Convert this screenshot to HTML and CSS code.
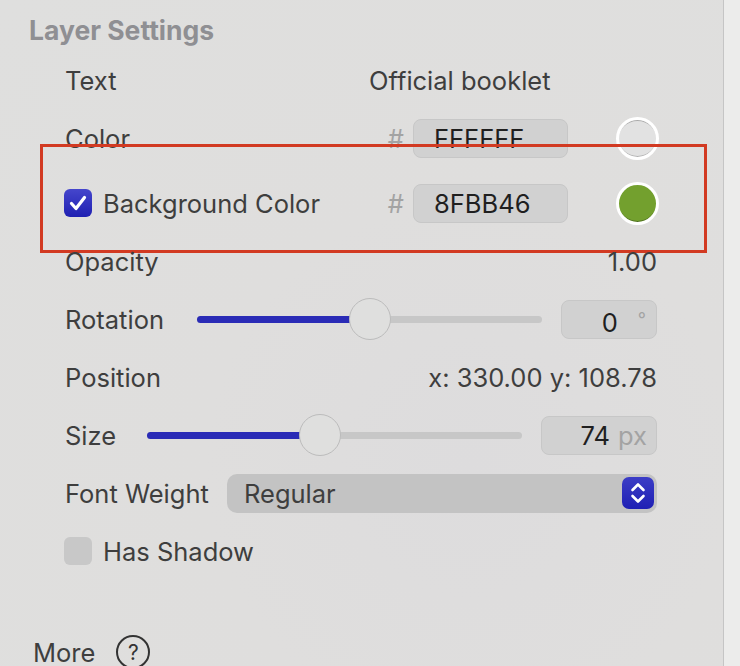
FILE: index.html
```html
<!DOCTYPE html>
<html lang="en">
  <head>
    <meta charset="UTF-8" />
    <title>Layer Settings</title>
    <link rel="stylesheet" href="styles.css">
  </head>
  <body>
    <div class="window">
      <section class="panel">
        <h2 class="panel-title">Layer Settings</h2>

        <div class="rows">
          <div class="row">
            <span class="label label-fixed">Text</span>
            <span class="value">Official booklet</span>
          </div>

          <div class="row">
            <span class="label">Color</span>
            <span class="hash">#</span>
            <div class="field field-hex">FFFFFF</div>
            <div class="swatch swatch-white"></div>
          </div>

          <!-- 배경색 (강조 표시) -->
          <div class="row row-highlight">
            <label class="check">
              <span class="checkbox checked">
                <svg viewBox="0 0 28 28" width="28" height="28">
                  <path d="M7.5 14.5 L12 19.5 L20.5 8.5" fill="none" stroke="#fff" stroke-width="3.2" stroke-linecap="round" stroke-linejoin="round"/>
                </svg>
              </span>
              <span class="label">Background Color</span>
            </label>
            <span class="hash">#</span>
            <div class="field field-hex">8FBB46</div>
            <div class="swatch swatch-green"></div>
            <div class="highlight-box"></div>
          </div>

          <div class="row">
            <span class="label">Opacity</span>
            <span class="value value-right">1.00</span>
          </div>

          <div class="row">
            <span class="label label-rotation">Rotation</span>
            <div class="slider slider-rotation">
              <div class="slider-fill" style="width: 50%"></div>
              <div class="slider-thumb" style="left: 50%"></div>
            </div>
            <div class="field field-num field-rotation">0<span class="unit unit-deg">°</span></div>
          </div>

          <div class="row">
            <span class="label">Position</span>
            <span class="value value-right">x: 330.00 y: 108.78</span>
          </div>

          <div class="row">
            <span class="label label-size">Size</span>
            <div class="slider slider-size">
              <div class="slider-fill" style="width: 46%"></div>
              <div class="slider-thumb" style="left: 46%"></div>
            </div>
            <div class="field field-num field-size">74<span class="unit">px</span></div>
          </div>

          <div class="row">
            <span class="label label-weight">Font Weight</span>
            <div class="select">
              <span>Regular</span>
              <span class="stepper">
                <svg viewBox="0 0 32 32" width="32" height="32">
                  <path d="M10.5 13 L16 7.5 L21.5 13" fill="none" stroke="#fff" stroke-width="2.6" stroke-linecap="round" stroke-linejoin="round"/>
                  <path d="M10.5 19 L16 24.5 L21.5 19" fill="none" stroke="#fff" stroke-width="2.6" stroke-linecap="round" stroke-linejoin="round"/>
                </svg>
              </span>
            </div>
          </div>

          <div class="row">
            <label class="check">
              <span class="checkbox"></span>
              <span class="label">Has Shadow</span>
            </label>
          </div>
        </div>

        <div class="more">
          <span class="more-label">More</span>
          <span class="help">?</span>
        </div>
      </section>
      <div class="edge"></div>
    </div>
  </body>
</html>
```

FILE: styles.css
```css
/* 기본 스타일 */
:root {
  --bg: #dfdedd;
  --text: #3e3e3e;
  --text-strong: #1f1f1f;
  --text-muted: #a3a3a3;
  --title: #8f8f93;
  --field: #d1d1d1;
  --field-border: #c7c7c7;
  --accent: #2a2bb6;
  --track: #c7c7c7;
  --alert: #d23a22;
}

html,
body {
  margin: 0;
  padding: 0;
  height: 100%;
}

body {
  font-family: Inter, "Liberation Sans", Arial, sans-serif;
  color: var(--text);
  background: var(--bg);
  overflow: hidden;
}

.window {
  display: flex;
  height: 666px;
}

/* 패널 */
.panel {
  width: 723px;
  box-sizing: border-box;
  background: radial-gradient(circle at 65% 70%, #dddcdd 0%, #dfdedd 40%, #dfdfde 100%);
  padding: 14px 0 0 0;
}

.edge {
  flex: 1;
  background: #ececeb;
  border-left: 1px solid #c5c5c5;
}

.panel-title {
  margin: 0 0 0 29px;
  font-size: 26.5px;
  font-weight: 700;
  color: var(--title);
  line-height: 32px;
}

.rows {
  padding: 5px 66px 0 65px;
}

.row {
  position: relative;
  display: flex;
  align-items: center;
  height: 58px;
  font-size: 25.5px;
}

.row-highlight {
  margin-top: 7px;
}

.label {
  flex: 1;
  white-space: nowrap;
}

.label-fixed {
  flex: 0 0 304px;
}

.value {
  color: var(--text);
}

.value-right {
  margin-left: auto;
}

/* 색상 입력 */
.hash {
  color: var(--text-muted);
  margin-right: 9px;
}

.field {
  box-sizing: border-box;
  height: 39px;
  line-height: 37px;
  background: var(--field);
  border: 1px solid var(--field-border);
  border-radius: 8px;
  color: var(--text-strong);
}

.field-hex {
  width: 155px;
  padding-left: 20px;
}

.swatch {
  box-sizing: border-box;
  width: 43px;
  height: 43px;
  margin-left: 48px;
  margin-right: -2px;
  border-radius: 50%;
  border: 3.5px solid #fff;
}

.swatch-white {
  background: #e2e2e2;
  box-shadow: inset 0 2px 0 -1px #a9a9a9, inset 0 -2px 0 -1px #b3b3b3;
}

.swatch-green {
  background: #73a02e;
  box-shadow: inset 0 -2px 0 -1px #4f6e22;
}

.highlight-box {
  position: absolute;
  left: -25px;
  right: -50px;
  top: -30px;
  bottom: -21px;
  border: 3px solid var(--alert);
  pointer-events: none;
}

/* 체크박스 */
.check {
  display: flex;
  align-items: center;
  flex: 1;
}

.checkbox {
  width: 28px;
  height: 28px;
  border-radius: 6px;
  background: #c8c8c8;
  margin-left: -1px;
  margin-right: 11px;
  display: flex;
}

.checkbox.checked {
  background: linear-gradient(#4546cc, #1f20b2);
}

/* 슬라이더 */
.label-rotation {
  flex: 0 0 132px;
}

.label-size {
  flex: 0 0 82px;
}

.label-weight {
  flex: 0 0 162px;
}

.slider {
  position: relative;
  height: 7px;
  border-radius: 4px;
  background: var(--track);
}

.slider-rotation {
  width: 345px;
  margin-right: 18px;
}

.slider-size {
  width: 375px;
  margin-right: 18px;
}

.slider-fill {
  height: 100%;
  border-radius: 4px;
  background: var(--accent);
}

.slider-thumb {
  position: absolute;
  top: 50%;
  width: 42px;
  height: 42px;
  box-sizing: border-box;
  margin: -21px 0 0 -21px;
  border-radius: 50%;
  border: 1.5px solid #bcbcbc;
  background: #dfdfde;
}

.field-num {
  margin-left: auto;
  text-align: right;
  color: var(--text-strong);
}

.field-rotation {
  width: 96px;
  padding-right: 10px;
}

.field-size {
  width: 116px;
  padding-right: 9px;
}

.unit {
  color: var(--text-muted);
  margin-left: 8px;
}

.unit-deg {
  font-size: 18px;
  vertical-align: 6px;
  margin-left: 20px;
}

/* 셀렉트 */
.select {
  flex: 1;
  display: flex;
  align-items: center;
  justify-content: space-between;
  height: 39px;
  padding: 0 3px 0 17px;
  border-radius: 10px;
  background: #c3c3c3;
  color: var(--text);
}

.stepper {
  width: 32px;
  height: 32px;
  border-radius: 7px;
  background: linear-gradient(#3c3dc6, #1f20b4);
  display: flex;
}

/* 더보기 */
.more {
  display: flex;
  align-items: center;
  margin: 55px 0 0 33px;
  font-size: 25.5px;
}

.help {
  box-sizing: border-box;
  width: 34px;
  height: 34px;
  margin-left: 21px;
  border: 2px solid #333;
  border-radius: 50%;
  display: flex;
  align-items: center;
  justify-content: center;
  font-size: 21px;
  color: #333;
}
```
